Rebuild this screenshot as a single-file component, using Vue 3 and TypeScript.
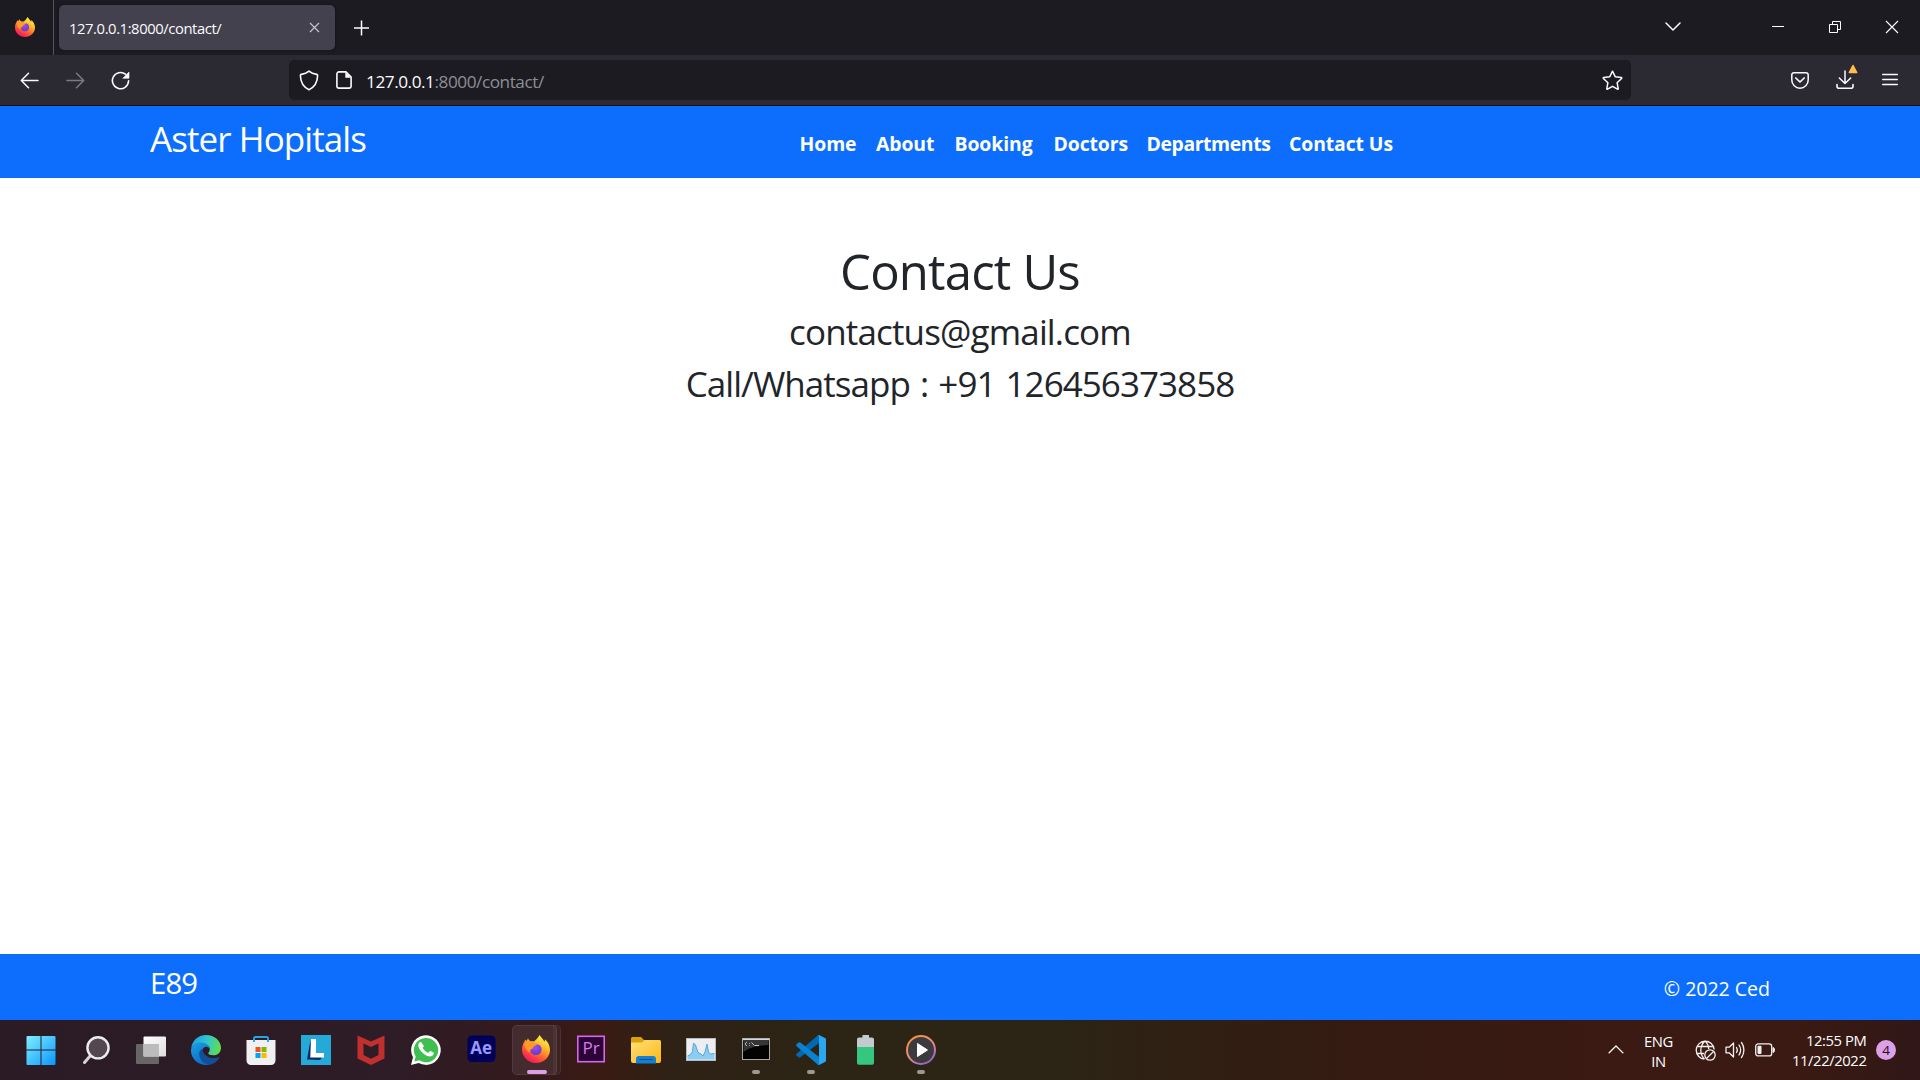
<script setup lang="ts">
interface NavLink { label: string; width: number; tight?: boolean }
interface TaskItem { id: string; running?: boolean; active?: boolean }

const links: NavLink[] = [
  { label: 'Home', width: 76.5 },
  { label: 'About', width: 78.5 },
  { label: 'Booking', width: 99 },
  { label: 'Doctors', width: 93 },
  { label: 'Departments', width: 142.5, tight: true },
  { label: 'Contact Us', width: 110 },
]

const tasks: TaskItem[] = [
  { id: 'start' }, { id: 'search' }, { id: 'taskview' }, { id: 'edge' }, { id: 'store' },
  { id: 'lapp' }, { id: 'mcafee' }, { id: 'whatsapp' }, { id: 'ae' },
  { id: 'firefox', active: true }, { id: 'pr' }, { id: 'explorer' }, { id: 'monitor' },
  { id: 'cmd', running: true }, { id: 'vscode', running: true }, { id: 'battery' },
  { id: 'player', running: true },
]
</script>

<template>
  <div class="screen">
    <svg width="0" height="0" class="defs">
      <defs>
        <linearGradient id="ffBody" x1="0.8" y1="0.05" x2="0.25" y2="1">
          <stop offset="0" stop-color="#fff04a" /><stop offset=".3" stop-color="#ffc02c" />
          <stop offset=".6" stop-color="#ff6a2c" /><stop offset=".85" stop-color="#fb2a50" /><stop offset="1" stop-color="#e41d70" />
        </linearGradient>
        <radialGradient id="ffGlobe" cx=".45" cy=".3" r=".7">
          <stop offset="0" stop-color="#a44be8" /><stop offset="1" stop-color="#5a3fd0" />
        </radialGradient>
        <symbol id="firefox" viewBox="0 0 28 28">
          <path fill="url(#ffBody)" d="M17.6 0c1 2.200 3.500 3.600 4.900 6.800.4-.8.500-1.600.3-2.600C25.800 6.500 28 10.500 28 14.800 28 22.200 21.800 28 14 28S0 22 0 14.800c0-3 .7-5.700 2.400-8L3 4.500l1.600 1.400L6 3.300c.5 1.500 1.500 2.500 3 3.100 1.200-.3 2.200-.3 3.200 0C13.200 5 14.500 4.300 15.500 3c.8-1 1.500-2 2.100-3z" />
          <circle cx="14" cy="14.500" r="5.600" fill="url(#ffGlobe)" />
          <path fill="#ff9a26" d="M2.500 8.500c3-2 6-2.300 8.500-1.500 1.300 1 2.500 1.300 4.500 1.500-.2 1.800-2.500 2-3.600 3-1 .9-.5 2.300-2.700 2.700-1.300.4-1.900 1.500-1 3.200C5 16.500 2.500 13 2.500 8.500z" />
        </symbol>
      </defs>
    </svg>

    <header class="tabs">
      <div class="ffview"><svg width="20" height="20"><use href="#firefox" /></svg></div>
      <div class="tab">
        <span class="tab-title">127.0.0.1:8000/contact/</span>
        <svg class="tab-close" width="11" height="11" viewBox="0 0 11 11"><path d="M1 1l9 9M10 1l-9 9" stroke="#c6c5ce" stroke-width="1.200" /></svg>
      </div>
      <svg class="plus" width="16" height="16" viewBox="0 0 16 16"><path d="M7.500 .5v15M0 8h15" stroke="#fbfbfe" stroke-width="1.500" /></svg>
      <div class="grow"></div>
      <svg class="chev" width="16" height="10" viewBox="0 0 16 10"><path d="M1 1l7 7 7-7" fill="none" stroke="#fbfbfe" stroke-width="1.500" stroke-linecap="round" /></svg>
      <svg class="min" width="12" height="14" viewBox="0 0 12 14"><path d="M0 6.500h12" stroke="#fff" /></svg>
      <svg class="rest" width="12" height="12" viewBox="0 0 12 12"><path d="M.5 3.500h8v8h-8zM3.500 3.500v-3h8v8h-3" fill="none" stroke="#fff" /></svg>
      <svg class="close" width="14" height="14" viewBox="0 0 14 14"><path d="M1 1l12 12M13 1L1 13" stroke="#fff" stroke-width="1.100" /></svg>
    </header>

    <div class="toolbar">
      <svg class="back" width="19" height="17" viewBox="0 0 19 17"><path d="M18 8.500H1.500M8.500 1.300L1.300 8.500l7.200 7.200" fill="none" stroke="#fbfbfe" stroke-width="1.500" stroke-linecap="round" stroke-linejoin="round" /></svg>
      <svg class="fwd" width="19" height="17" viewBox="0 0 19 17"><path d="M1 8.500h16.500M10.500 1.300l7.200 7.200-7.200 7.200" fill="none" stroke="#7b7a82" stroke-width="1.500" stroke-linecap="round" stroke-linejoin="round" /></svg>
      <svg class="reload" width="19" height="19" viewBox="0 0 19 19"><path d="M17.600 9.800A8.100 8.100 0 1 1 14.500 3.200" fill="none" stroke="#fbfbfe" stroke-width="1.600" stroke-linecap="round" /><path d="M18 1v6.300h-6.200z" fill="#fbfbfe" stroke="#fbfbfe" stroke-width=".6" stroke-linejoin="round" /></svg>
      <div class="urlbar">
        <svg class="shield" width="20" height="21" viewBox="0 0 20 21"><path d="M10 1.200c2 1.800 4.600 2.800 7.700 3.200.6.1.9.5.9 1.100-.1 6.300-2.400 11.300-8.600 14.200C3.800 16.800 1.500 11.800 1.400 5.500c0-.6.300-1 .9-1.100C5.400 4 8 3 10 1.200z" fill="none" stroke="#fbfbfe" stroke-width="1.600" stroke-linejoin="round" /></svg>
        <svg class="page" width="16" height="18" viewBox="0 0 16 18"><path d="M10 .9H3A2.100 2.100 0 0 0 .9 3v12A2.100 2.100 0 0 0 3 17.100h10a2.100 2.100 0 0 0 2.100-2.100V6z" fill="none" stroke="#fbfbfe" stroke-width="1.600" stroke-linejoin="round" /><path d="M9.300 1v5.700h5.800z" fill="#fbfbfe" /></svg>
        <span class="url"><b>127.0.0.1</b>:8000/contact/</span>
        <svg class="star" width="21" height="20" viewBox="0 0 21 20"><path d="M10.500 1.200l2.700 5.500 6.100.9c.5.100.6.500.3.900l-4.500 4.200 1.100 6c.1.500-.3.700-.7.500l-5-2.900-5 2.900c-.4.200-.8 0-.7-.5l1.100-6L1.400 8.500c-.3-.4-.2-.8.3-.9l6.100-.9z" fill="none" stroke="#fbfbfe" stroke-width="1.500" stroke-linejoin="round" /></svg>
      </div>
      <svg class="pocket" width="18" height="17" viewBox="0 0 18 17"><path d="M2.800.8h12.400a2 2 0 0 1 2 2V8a8.200 8.200 0 0 1-16.400 0V2.800a2 2 0 0 1 2-2z" fill="none" stroke="#fbfbfe" stroke-width="1.500" /><path d="M4.800 6L9 10l4.200-4" fill="none" stroke="#fbfbfe" stroke-width="1.700" stroke-linecap="round" stroke-linejoin="round" /></svg>
      <svg class="down" width="22" height="26" viewBox="0 0 22 26"><path d="M9 7v12.500M3.300 14L9 19.500l5.700-5.500" fill="none" stroke="#fbfbfe" stroke-width="1.500" stroke-linecap="round" stroke-linejoin="round" /><path d="M1 20.500v1.800a2 2 0 0 0 2 2h12a2 2 0 0 0 2-2v-1.800" fill="none" stroke="#fbfbfe" stroke-width="1.600" stroke-linecap="round" /><path d="M17 1.500l3.700 7h-7.400z" fill="#ffbd4f" stroke="#ffbd4f" stroke-width="1.500" stroke-linejoin="round" /></svg>
      <svg class="menu" width="16" height="13" viewBox="0 0 16 13"><path d="M.7 1.500h14.600M.7 6.500h14.600M.7 11.500h14.600" stroke="#fbfbfe" stroke-width="1.400" stroke-linecap="round" /></svg>
    </div>

    <nav class="navbar">
      <span class="brand">Aster Hopitals</span>
      <div class="links">
        <a v-for="l in links" :key="l.label" :class="{ tight: l.tight }" :style="{ width: l.width + 'px' }">{{ l.label }}</a>
      </div>
    </nav>

    <main>
      <h1>Contact Us</h1>
      <h2 class="mail">contactus@gmail.com</h2>
      <h2 class="phone">Call/Whatsapp : +91 126456373858</h2>
    </main>

    <footer>
      <span class="code">E89</span>
      <span class="copy">© 2022 Ced</span>
    </footer>

    <div class="taskbar">
      <div v-for="t in tasks" :key="t.id" class="task" :class="{ active: t.active }">
        <svg v-if="t.id === 'start'" width="30" height="30" viewBox="0 0 30 30">
          <defs><linearGradient id="win" x1="0" y1="0" x2="1" y2="1"><stop offset="0" stop-color="#7ff0ff" /><stop offset="1" stop-color="#0a95ff" /></linearGradient></defs>
          <path fill="url(#win)" d="M1.500 1h13v13.500H.5V2a1 1 0 0 1 1-1zM15.500 1h13a1 1 0 0 1 1 1v12.500h-14zM.5 15.500h14V30h-13a1 1 0 0 1-1-1zM15.500 15.500h14V29a1 1 0 0 1-1 1h-13z" />
        </svg>
        <svg v-else-if="t.id === 'search'" width="30" height="30" viewBox="0 0 30 30">
          <path d="M9.500 20.500L3.500 27.500" stroke="#d4d4d6" stroke-width="3" stroke-linecap="round" />
          <circle cx="17" cy="12.800" r="10.600" fill="#54474f" stroke="#ececee" stroke-width="2.400" />
        </svg>
        <svg v-else-if="t.id === 'taskview'" width="30" height="30" viewBox="0 0 30 30">
          <defs><linearGradient id="tv" x1="0" y1="0" x2="1" y2="1"><stop offset="0" stop-color="#fff" /><stop offset="1" stop-color="#dedede" /></linearGradient></defs>
          <rect x="0" y="9" width="23" height="20" rx="1" fill="#686567" />
          <rect x="7.500" y="1.500" width="22.500" height="20" rx="1" fill="url(#tv)" />
          <rect x="7.500" y="9" width="15.500" height="12.500" fill="#bdbcbd" />
        </svg>
        <svg v-else-if="t.id === 'edge'" width="30" height="30" viewBox="0 0 30 30">
          <defs>
            <linearGradient id="e1" x1="0" y1=".3" x2="1" y2=".5"><stop offset="0" stop-color="#1c9fe0" /><stop offset=".5" stop-color="#31c5d0" /><stop offset="1" stop-color="#62dd4c" /></linearGradient>
            <linearGradient id="e2" x1="0" y1="0" x2=".6" y2="1"><stop offset="0" stop-color="#1aa0e2" /><stop offset="1" stop-color="#0a6cc9" /></linearGradient>
          </defs>
          <path fill="url(#e1)" d="M.2 13.500C1 5.500 7 0 15 0c8.500 0 15 6 15 12.700 0 4.500-3.300 7.600-7.600 7.600-3 0-5.200-1-5.200-2 0-.8 1.600-1.500 1.600-4 0-3.600-4-6-8.300-6C5.600 8.300 2 10.500.2 13.500z" />
          <path fill="url(#e2)" d="M.2 13.500c1.500-3.700 5-6 9.600-6 5.300 0 9 3 9 6.700-.6-1.500-2-2.400-3.600-2.400-2.700 0-4.500 3-4.500 6.200 0 5.300 4 10.500 8.800 11.200-1.500.6-3 .8-4.500.8C6.600 30 0 23.500 0 15.500z" />
          <path fill="#134f98" d="M11.300 13.800c-2 1-3.100 2.800-3.100 5.200 0 5 3.800 9.800 9.300 10.700 4.500-.2 8.600-3 10.800-7 .4-.7-.1-1.100-.7-.8-1.600.8-3.300 1.200-5 1.200-6 0-10.800-3.600-11.300-9.300z" />
        </svg>
        <svg v-else-if="t.id === 'store'" width="30" height="30" viewBox="0 0 30 30">
          <path d="M.5 5h29v20.500a4.500 4.500 0 0 1-4.500 4.500H5a4.500 4.500 0 0 1-4.500-4.500z" fill="#f1f0f1" />
          <path d="M8 7V3.300A1.300 1.300 0 0 1 9.300 2h11.400A1.300 1.300 0 0 1 22 3.300V7" fill="none" stroke="#1fa8e2" stroke-width="1.900" />
          <path d="M9.500 12h5v5h-5z" fill="#f25022" /><path d="M15.500 12h5v5h-5z" fill="#7fba00" /><path d="M9.500 18h5v5h-5z" fill="#00a4ef" /><path d="M15.500 18h5v5h-5z" fill="#ffb900" />
        </svg>
        <svg v-else-if="t.id === 'lapp'" width="30" height="30" viewBox="0 0 30 30">
          <path d="M0 0h30v30H0z" fill="#25a9d8" /><path d="M9.500 5L6 24.500l13 .5 2-2.500-10-1z" fill="#0b2c66" /><path d="M10 4h5v14h8v4.500H9.300z" fill="#fff" />
        </svg>
        <svg v-else-if="t.id === 'mcafee'" width="30" height="30" viewBox="0 0 30 30">
          <path d="M1.500 .5L15 6.500 28.500 .5v23L15 30 1.500 23.500zM7.500 8.500v11.500l7.500 3.700 7.500-3.700V8.500L15 12z" fill="#c12f2e" fill-rule="evenodd" />
        </svg>
        <svg v-else-if="t.id === 'whatsapp'" width="30" height="30" viewBox="0 0 30 30">
          <path d="M0 30l2-7.700A14.800 14.800 0 1 1 7.700 28z" fill="#fff" /><path d="M3.400 26.600l1.300-5A12.200 12.200 0 1 1 8.300 25.300z" fill="#3fbf50" />
          <path d="M10.500 7.500c-.4-.7-1.200-.6-1.700-.2-3.100 2.800-.7 6.800 1.700 9.500 3 3.400 7.600 6.200 11 3.800 1-.8 1.600-2 1.200-2.800-.9-.8-2.300-1.500-3.400-1.900-.9-.2-1.500 1.800-2.300 1.800-2.300-.8-4.200-2.500-5.300-4.700 0-.7 1.300-1.300 1.200-2.100z" fill="#fff" />
        </svg>
        <svg v-else-if="t.id === 'ae'" width="30" height="30" viewBox="0 0 30 30">
          <rect x="1.500" y=".500" width="28" height="26.500" rx="4.500" fill="#00005b" /><text x="15.200" y="19" text-anchor="middle" font-size="17" font-weight="700" fill="#9999ff">Ae</text>
        </svg>
        <svg v-else-if="t.id === 'firefox'" width="28" height="28"><use href="#firefox" /></svg>
        <svg v-else-if="t.id === 'pr'" width="30" height="30" viewBox="0 0 30 30">
          <rect x="1.800" y="1.300" width="26.400" height="25.400" fill="#2a0634" stroke="#d865ee" stroke-width="1.600" /><text x="15" y="19" text-anchor="middle" font-size="17" font-weight="500" fill="#dd76f5">Pr</text>
        </svg>
        <svg v-else-if="t.id === 'explorer'" width="30" height="30" viewBox="0 0 30 30">
          <defs><linearGradient id="fold" x1="0" y1="0" x2="1" y2="1"><stop offset="0" stop-color="#ffe07a" /><stop offset="1" stop-color="#fdb813" /></linearGradient></defs>
          <path d="M0 3.500A1.500 1.500 0 0 1 1.500 2H10l3 3h15a2 2 0 0 1 2 2v5H0z" fill="#dd9f0a" /><path d="M0 7.500h11l2.500-2.500H28a2 2 0 0 1 2 2v19a2 2 0 0 1-2 2H2a2 2 0 0 1-2-2z" fill="url(#fold)" />
          <path d="M5 28.500V24a3 3 0 0 1 3-3h14a3 3 0 0 1 3 3v4.500z" fill="#1580d2" /><path d="M8.500 24.500h13" stroke="#0b4d90" />
        </svg>
        <svg v-else-if="t.id === 'monitor'" width="30" height="30" viewBox="0 0 30 30">
          <rect x=".5" y="3.500" width="29" height="22" fill="#eeeef1" stroke="#b7bcc4" /><path d="M1.500 21l3-1.500 2-3 1-8.500 2 2 2.500 7.500 3 1.500 2 2 2-4 2-8 1.500 8 2 2 4-.5v6h-27z" fill="#8ccbf2" /><path d="M1.500 21l3-1.500 2-3 1-8.500 2 2 2.500 7.500 3 1.500 2 2 2-4 2-8 1.500 8 2 2 4-.5" fill="none" stroke="#55a7dc" />
        </svg>
        <svg v-else-if="t.id === 'cmd'" width="30" height="30" viewBox="0 0 30 30">
          <rect x="1.500" y="3.500" width="27" height="21" fill="#020202" stroke="#a5a8ab" /><path d="M2 4.500h26" stroke="#d3d6da" stroke-width="1.500" /><path d="M2.500 6h25v4c-12 .5-20 3-25 7z" fill="#353535" /><path d="M6 7.500c-2-.5-2 3.500 0 3M8.500 8v.8M8.500 10.200v.6M10.500 7.500l3 3.200M14 10.500h4" stroke="#dadada" fill="none" stroke-width=".9" />
        </svg>
        <svg v-else-if="t.id === 'vscode'" width="30" height="30" viewBox="0 0 30 30">
          <path d="M.6 20.700c-.7-.6-.7-1.400 0-2L21.600.500c.6-.5 1-.5 1.500-.2V8L4.300 22.300c-.6.400-1.200.300-1.700-.1z" fill="#0069b4" /><path d="M.6 9.200c-.7.600-.7 1.400 0 2l21 18.300c.6.500 1 .5 1.500.2V22L4.300 7.500c-.6-.4-1.200-.3-1.700.1z" fill="#0a82cf" /><path d="M22 .3c.4-.3 1-.3 1.500-.1l5.500 2.700c.6.300 1 .8 1 1.500v21.200c0 .7-.4 1.200-1 1.500l-5.500 2.700c-.5.200-1.100.2-1.500-.1.500.1 1-.3 1-.9V1.200c0-.6-.5-1-1-.9z" fill="#2aa7f0" />
        </svg>
        <svg v-else-if="t.id === 'battery'" width="30" height="30" viewBox="0 0 30 30">
          <path d="M11.500 0h6.500v2.500h3a2 2 0 0 1 2 2V12H6V4.500a2 2 0 0 1 2-2h3.500z" fill="#c4cbce" /><path d="M6 12h17v16a1.800 1.800 0 0 1-1.800 1.800H7.800A1.800 1.800 0 0 1 6 28z" fill="#35c780" />
        </svg>
        <svg v-else width="30" height="30" viewBox="0 0 30 30">
          <defs><linearGradient id="mp" x1=".2" y1="0" x2=".8" y2="1"><stop offset="0" stop-color="#ff8f3c" /><stop offset=".5" stop-color="#e58a8a" /><stop offset="1" stop-color="#8a5fd0" /></linearGradient></defs>
          <circle cx="15" cy="15" r="14" fill="#3b3b3d" stroke="url(#mp)" stroke-width="2" /><path d="M11.500 8.500l10 6.500-10 6.500z" fill="#fff" stroke="#fff" stroke-linejoin="round" />
        </svg>
        <i v-if="t.running || t.active" class="pill"></i>
      </div>
      <div class="grow"></div>
      <svg class="tray-up" width="16" height="9" viewBox="0 0 16 9"><path d="M.7 8.300L8 1l7.300 7.300" fill="none" stroke="#f4efee" stroke-width="1.300" /></svg>
      <div class="lang"><span>ENG</span><span>IN</span></div>
      <svg class="globe" width="21" height="21" viewBox="0 0 21 21"><g fill="none" stroke="#f4efee" stroke-width="1.300"><path d="M9.500 19.200A9 9 0 1 1 19.200 9.500M9.500 19.200C4.500 14 4.500 6 10 .9c2.300 2.300 3.600 5.200 3.800 8.300M1.500 6.500h17M1.500 13.500h7.500" /><circle cx="15" cy="15" r="5.200" /><path d="M11.500 18.500l7-7" /></g></svg>
      <svg class="vol" width="20" height="18" viewBox="0 0 20 18"><g fill="none" stroke="#f4efee" stroke-width="1.300" stroke-linecap="round" stroke-linejoin="round"><path d="M1 6.200h3.200L8.500 2v14l-4.300-4.200H1z" /><path d="M11.500 6.500c1 1.500 1 3.500 0 5M14 4c2 3 2 7 0 10M16.500 1.500c3.200 4.500 3.200 10.500 0 15" /></g></svg>
      <svg class="batt" width="20" height="14" viewBox="0 0 20 14"><rect x=".7" y=".9" width="16" height="12" rx="2.500" fill="none" stroke="#f4efee" stroke-width="1.300" /><path d="M18 4.500c2 .3 2 4.700 0 5z" fill="#f4efee" stroke="#f4efee" /><rect x="2.500" y="2.800" width="4" height="8.200" rx="1" fill="#f4efee" /></svg>
      <div class="clock"><span>12:55 PM</span><span>11/22/2022</span></div>
      <span class="count">4</span>
    </div>
  </div>
</template>

<style>
body { margin: 0; overflow: hidden; }
</style>

<style scoped>
.screen { width: 1920px; height: 1080px; display: flex; flex-direction: column; background: #fff; font-family: "Open Sans", "Noto Sans", sans-serif; overflow: hidden; }
.screen svg { display: block; flex: none; }
.screen .defs { position: absolute; }
.grow { flex: 1; }
.tabs { height: 55px; flex: none; display: flex; background: #1c1b22; }
.ffview { width: 54px; padding: 17px 0 0 15px; box-sizing: border-box; border-right: 1px solid #55545c; flex: none; }
.tab { margin: 5px 0 0 5px; width: 276px; height: 45px; box-sizing: border-box; padding-left: 10px; border-radius: 5px; background: #42414d; box-shadow: 0 0 3px rgba(0, 0, 0, .5); display: flex; }
.tab-title { width: 240px; font-size: 14.8px; line-height: 47px; letter-spacing: -.42px; color: #fbfbfe; white-space: nowrap; }
.tab-close { margin-top: 17px; }
.plus { margin: 20px 0 0 19px; }
.chev { margin: 22px 91px 0 0; }
.min { margin: 20px 45px 0 0; }
.rest { margin: 21px 44px 0 0; }
.close { margin: 20px 21px 0 0; }
.toolbar { height: 51px; box-sizing: border-box; flex: none; display: flex; background: #2b2a33; border-bottom: 1px solid #0c0c0d; }
.back { margin: 17px 0 0 20px; }
.fwd { margin: 17px 0 0 27px; }
.reload { margin: 16px 0 0 25.5px; }
.urlbar { margin: 5px 0 0 159.5px; width: 1342px; height: 40px; border-radius: 5px; background: #1c1b22; display: flex; }
.shield { margin: 10px 0 0 10px; }
.page { margin: 11px 0 0 17px; }
.url { flex: 1; margin-left: 14px; font-size: 17.2px; line-height: 44px; letter-spacing: -.45px; color: #8f8e95; }
.url b { font-weight: 400; color: #fbfbfe; }
.star { margin: 10px 8.500px 0 0; }
.pocket { margin: 17px 0 0 160px; }
.down { margin: 9px 0 0 26.500px; }
.menu { margin: 18px 0 0 24.500px; }
.navbar { height: 72px; flex: none; background: #0d6efd; display: flex; color: #fff; }
.brand { width: 649.5px; margin-left: 150px; line-height: 66px; font-size: 35px; letter-spacing: -.92px; }
.links { display: flex; padding-top: 3px; }
.links a { line-height: 69px; font-size: 19.400px; font-weight: 700; letter-spacing: -.1px; white-space: nowrap; }
.links .tight { letter-spacing: -.4px; }
main { flex: 1; padding-top: 63px; text-align: center; color: #212529; }
h1, h2 { margin: 0; font-weight: 400; }
h1 { font-size: 49px; line-height: 60px; letter-spacing: -.8px; margin-bottom: 9px; }
h2 { font-size: 35px; line-height: 43px; margin-bottom: 9px; }
.mail { letter-spacing: -.85px; }
.phone { letter-spacing: -.95px; word-spacing: 1.9px; }
footer { height: 66px; flex: none; padding: 0 150px; background: #0d6efd; color: #fff; display: flex; justify-content: space-between; }
.code { font-size: 29.300px; line-height: 59px; letter-spacing: -.9px; }
.copy { font-size: 19.600px; line-height: 69px; letter-spacing: -.05px; }
.taskbar { height: 60px; flex: none; display: flex; padding-left: 13.5px; background: linear-gradient(90deg, #2a1b25 0, #2e1c26 400px, #351a1c 540px, #3a1b13 600px, #2e2115 670px, #2c2415 800px, #2c2415 1060px, #341b12 1330px, #3a1a12 1600px, #3a1a12 1800px, #301717 1920px); }
.task { width: 55px; position: relative; display: flex; justify-content: center; padding-top: 15px; box-sizing: border-box; z-index: 0; }
.active::before { content: ""; position: absolute; z-index: -1; left: 3px; top: 5px; width: 43px; height: 48px; background: rgba(255, 255, 255, .08); border: 1px solid rgba(255, 255, 255, .07); border-radius: 5px; }
.active::after { content: ""; position: absolute; z-index: -1; left: 44px; top: 5px; width: 7px; height: 48px; border: 1px solid rgba(255, 255, 255, .07); border-left: 0; border-radius: 0 5px 5px 0; background: rgba(255, 255, 255, .04); }
.pill { position: absolute; left: 23.500px; bottom: 6px; width: 8px; height: 4px; border-radius: 2px; background: #9d9890; }
.active .pill { left: 18px; width: 20px; background: #dd9fe6; }
.tray-up { margin: 25px 19px 0 0; }
.lang { width: 32px; padding-top: 11px; display: flex; flex-direction: column; align-items: center; margin-right: 20.5px; }
.lang span, .clock span { font-size: 14.800px; line-height: 20px; color: #fff; letter-spacing: -.4px; white-space: nowrap; }
.globe { margin: 20px 9px 0 0; }
.vol { margin: 21px 10px 0 0; }
.batt { margin: 23px 0 0; }
.clock { width: 91.5px; padding-top: 10px; display: flex; flex-direction: column; align-items: flex-end; }
.count { margin: 20px 24px 0 9.5px; width: 20px; height: 20px; border-radius: 50%; background: #dd9fe6; color: #1a1020; font-size: 13.5px; line-height: 21px; text-align: center; }
</style>
